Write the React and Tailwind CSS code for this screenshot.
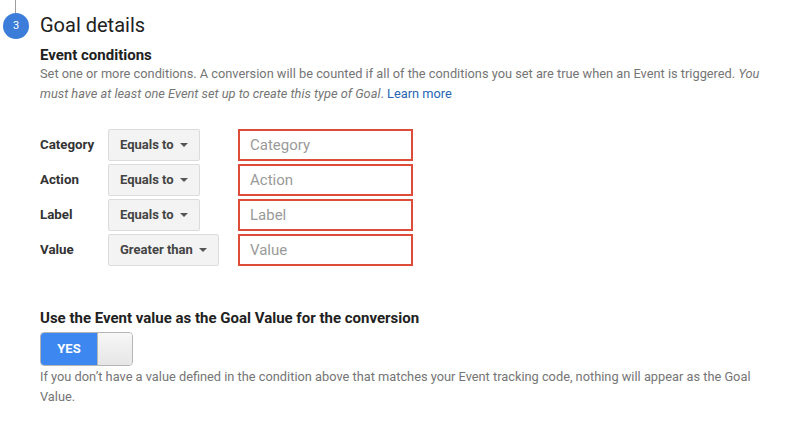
import React, { useState } from "react";

const conditions = [
  { label: "Category", op: "Equals to", width: "w-[92px]" },
  { label: "Action", op: "Equals to", width: "w-[92px]" },
  { label: "Label", op: "Equals to", width: "w-[92px]" },
  { label: "Value", op: "Greater than", width: "w-[111px]" },
];

const Caret = () => (
  <svg width="8" height="4" viewBox="0 0 8 4" className="shrink-0">
    <path d="M0 0h8L4 4z" fill="#555" />
  </svg>
);

const App = () => {
  const [useValue, setUseValue] = useState(true);

  return (
    <div
      className="w-[800px] h-[422px] bg-white overflow-hidden text-[#212121]"
      style={{ fontFamily: "Roboto, 'Liberation Sans', sans-serif" }}
    >
      {/* step header */}
      <div className="flex">
        <div className="w-[40px] flex flex-col">
          <div className="w-px h-[13px] bg-[#9e9e9e] ml-[15px]" />
          <div className="w-[26px] h-[26px] ml-[3px] rounded-full bg-[#3b7dd8] text-white text-[11px] flex items-center justify-center">
            3
          </div>
        </div>
        <h2 className="mt-[13px] text-[20px] leading-[25px] text-[#212121]">Goal details</h2>
      </div>

      <div className="pl-10">
        <h3 className="mt-[7px] text-[15px] leading-[18px] font-bold text-[#212121]">
          Event conditions
        </h3>
        <p className="text-[12.8px] leading-[20px] text-[#757575]">
          Set one or more conditions. A conversion will be counted if all of the conditions you set are
          true when an Event is triggered. <i>You</i>
          <br />
          <i>must have at least one Event set up to create this type of Goal</i>.{" "}
          <a href="#" className="text-[#2a64b4]">
            Learn more
          </a>
        </p>

        {/* condition rows */}
        <div className="mt-[25px] flex flex-col gap-[3px]">
          {conditions.map((c) => (
            <div key={c.label} className="flex items-center">
              <div className="w-[68px] text-[13.3px] font-bold text-[#333]">{c.label}</div>
              <div className="w-[130px]">
                <button
                  type="button"
                  className={`${c.width} h-[32px] flex items-center justify-between px-[11px] bg-[#f3f3f3] border border-[#dcdcdc] rounded-[2px] text-[13px] font-bold text-[#444]`}
                >
                  <span>{c.op}</span>
                  <Caret />
                </button>
              </div>
              <input
                placeholder={c.label}
                className="w-[175px] h-[32px] px-[10px] border-2 border-[#dd4b39] text-[15px] text-[#333] placeholder:text-[#9a9a9a] outline-none"
              />
            </div>
          ))}
        </div>

        <h3 className="mt-[42px] text-[15px] leading-[20px] font-bold text-[#212121]">
          Use the Event value as the Goal Value for the conversion
        </h3>

        {/* yes/no toggle */}
        <button
          type="button"
          onClick={() => setUseValue(!useValue)}
          className="mt-[4px] flex w-[93px] h-[34px] rounded-[4px] border border-[#b5b5b5] overflow-hidden"
        >
          <span className="w-[56px] h-full bg-[#3d87f0] text-white text-[13px] font-bold flex items-center justify-center">
            YES
          </span>
          <span className="flex-1 h-full bg-gradient-to-b from-[#f7f7f7] to-[#e6e6e6] border-l border-[#b5b5b5]" />
        </button>

        <p className="mt-[1px] text-[12.8px] leading-[20px] text-[#757575]">
          If you don’t have a value defined in the condition above that matches your Event tracking code,
          nothing will appear as the Goal
          <br />
          Value.
        </p>
      </div>
    </div>
  );
};

export default App;
